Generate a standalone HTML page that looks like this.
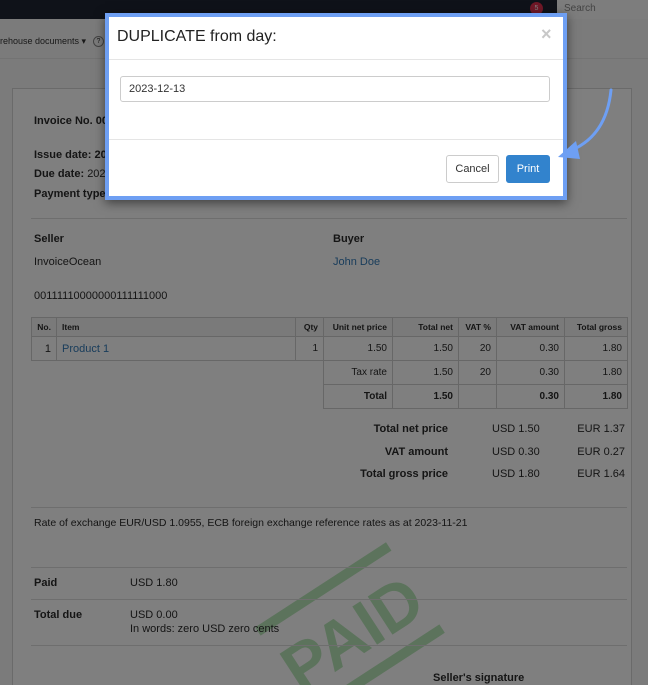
<!DOCTYPE html>
<html><head><style>
*{margin:0;padding:0;box-sizing:border-box}
html,body{background:#f6f6f6;width:648px;height:685px;overflow:hidden}
body{font-family:"Liberation Sans",sans-serif;color:#2a2a2a;font-size:11px;position:relative}
.a{position:absolute;white-space:nowrap}
.b{font-weight:bold}
.l{color:#337ab7}
.hr{position:absolute;height:1px;background:#dcdcdc}
table{position:absolute;left:31px;top:317px;border-collapse:collapse;font-size:10px}
td{border:1px solid #cfcfcf;padding:0 5px;text-align:right;height:24px}
tr.h td{height:19px;font-size:8.5px;font-weight:bold;background:#f4f4f4}
.n{border:none}
</style></head><body>
<div class="a" style="left:0;top:0;width:648px;height:19px;background:#1e2432"></div>
<div class="a" style="left:530px;top:2px;width:13px;height:13px;border-radius:50%;background:#e0304e;color:#fff;font-size:7px;text-align:center;line-height:13px">5</div>
<div class="a" style="left:557px;top:0;width:91px;height:19px;background:#fafafa;color:#888;font-size:10px;padding:3px 7px">Search</div>
<div class="a" style="left:0;top:36px;font-size:9px;color:#333">rehouse documents ▾</div>
<div class="a" style="left:93px;top:36px;width:11px;height:11px;border:1px solid #888;border-radius:50%;font-size:7px;text-align:center;line-height:9px">?</div>
<div class="hr" style="left:0;top:58px;width:648px;background:#e6e6e6"></div>
<div class="a" style="left:12px;top:88px;width:620px;height:597px;border:1px solid #d4d4d4;border-bottom:none;background:#fff"></div>
<div class="a b" style="left:34px;top:115px">Invoice No. 00</div>
<div class="a b" style="left:34px;top:149px">Issue date: 202</div>
<div class="a b" style="left:34px;top:168px">Due date: <span style="font-weight:normal">2023</span></div>
<div class="a b" style="left:34px;top:188px">Payment type:</div>
<div class="hr" style="left:31px;top:218px;width:596px"></div>
<div class="a b" style="left:34px;top:233px">Seller</div>
<div class="a b" style="left:333px;top:233px">Buyer</div>
<div class="a" style="left:34px;top:256px">InvoiceOcean</div>
<div class="a l" style="left:333px;top:256px">John Doe</div>
<div class="a" style="left:34px;top:290px">00111110000000111111000</div>
<svg class="a" style="left:235px;top:520px" width="230" height="165" viewBox="-115 -110 230 165">
<g transform="translate(0,0) rotate(-33)" fill="#b9e6b9">
<rect x="-78" y="-54" width="156" height="10"/>
<rect x="-78" y="44" width="156" height="10"/>
<text x="0" y="27" font-family="Liberation Sans" font-weight="bold" font-size="66" text-anchor="middle">PAID</text>
</g></svg>
<table>
<tr class="h"><td style="width:25px">No.</td><td style="width:239px;text-align:left">Item</td><td style="width:28px">Qty</td><td style="width:69px">Unit net price</td><td style="width:66px">Total net</td><td style="width:38px">VAT %</td><td style="width:68px">VAT amount</td><td style="width:63px">Total gross</td></tr>
<tr><td style="font-size:11px">1</td><td class="l" style="text-align:left;font-size:11px">Product 1</td><td>1</td><td>1.50</td><td>1.50</td><td>20</td><td>0.30</td><td>1.80</td></tr>
<tr><td class="n"></td><td class="n"></td><td class="n" style="border-right:1px solid #cfcfcf"></td><td>Tax rate</td><td>1.50</td><td>20</td><td>0.30</td><td>1.80</td></tr>
<tr class="b"><td class="n"></td><td class="n"></td><td class="n" style="border-right:1px solid #cfcfcf"></td><td>Total</td><td>1.50</td><td></td><td>0.30</td><td>1.80</td></tr>
</table>
<div class="a b" style="right:200px;top:423px">Total net price</div>
<div class="a" style="left:492px;top:423px">USD 1.50</div>
<div class="a" style="right:23px;top:423px">EUR 1.37</div>
<div class="a b" style="right:200px;top:446px">VAT amount</div>
<div class="a" style="left:492px;top:446px">USD 0.30</div>
<div class="a" style="right:23px;top:446px">EUR 0.27</div>
<div class="a b" style="right:200px;top:468px">Total gross price</div>
<div class="a" style="left:492px;top:468px">USD 1.80</div>
<div class="a" style="right:23px;top:468px">EUR 1.64</div>
<div class="hr" style="left:31px;top:507px;width:596px"></div>
<div class="a" style="left:34px;top:517px;font-size:10.5px">Rate of exchange EUR/USD 1.0955, ECB foreign exchange reference rates as at 2023-11-21</div>
<div class="hr" style="left:31px;top:567px;width:596px"></div>
<div class="a b" style="left:34px;top:577px">Paid</div>
<div class="a" style="left:130px;top:577px">USD 1.80</div>
<div class="hr" style="left:31px;top:599px;width:596px"></div>
<div class="a b" style="left:34px;top:609px">Total due</div>
<div class="a" style="left:130px;top:609px">USD 0.00</div>
<div class="a" style="left:130px;top:623px">In words: zero USD zero cents</div>
<div class="hr" style="left:31px;top:645px;width:596px"></div>
<div class="a b" style="left:433px;top:672px">Seller's signature</div>
<div class="a" style="left:0;top:0;width:648px;height:685px;background:rgba(0,0,0,0.5)"></div>
<div class="a" style="left:105px;top:13px;width:462px;height:187px;border:4px solid #6e9ff3;background:#fff;box-shadow:0 3px 10px rgba(0,0,0,.5)"></div>
<div class="a" style="left:117px;top:28px;font-size:16px;color:#222">DUPLICATE from day:</div>
<div class="a" style="left:541px;top:24px;font-size:18px;color:#c8c8c8;font-weight:bold">×</div>
<div class="hr" style="left:109px;top:59px;width:454px;background:#e5e5e5"></div>
<div class="a" style="left:120px;top:76px;width:430px;height:26px;border:1px solid #ccc;border-radius:3px;font-size:11px;padding:6px 8px;color:#333">2023-12-13</div>
<div class="hr" style="left:109px;top:139px;width:454px;background:#e5e5e5"></div>
<div class="a" style="left:446px;top:155px;width:53px;height:28px;border:1px solid #ccc;border-radius:3px;font-size:11px;text-align:center;line-height:26px;color:#333;background:#fff">Cancel</div>
<div class="a" style="left:506px;top:155px;width:44px;height:28px;border-radius:3px;font-size:11px;text-align:center;line-height:28px;color:#fff;background:#3283cd">Print</div>
<svg class="a" style="left:550px;top:85px" width="70" height="80">
<path d="M61 5 C58 35 45 55 22 65" stroke="#6e9ff3" stroke-width="3" fill="none" stroke-linecap="round"/>
<path d="M8 72 L26 56 L30 74 Z" fill="#6e9ff3"/>
</svg>
</body></html>
